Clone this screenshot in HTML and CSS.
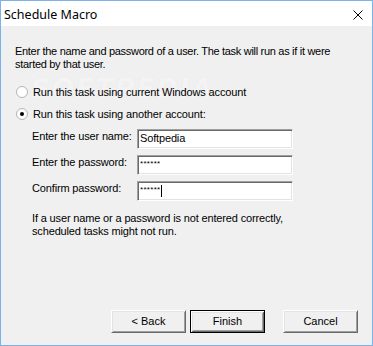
FILE: index.html
```
<!DOCTYPE html>
<html>
<head>
<meta charset="utf-8">
<link rel="stylesheet" href="styles.css">
</head>
<body>
<div class="window">
  <div class="titlebar">
    <span class="title">Schedule Macro</span>
    <svg class="close" width="10" height="10" viewBox="0 0 10 10"><path d="M0.5 0.5 L9.5 9.5 M9.5 0.5 L0.5 9.5" stroke="#000" stroke-width="1"/></svg>
  </div>
  <div class="content">
    <span class="watermark">SOFTPEDIA</span>
    <p class="intro">Enter the name and password of a user. The task will run as if it were<br>started by that user.</p>
    <div class="radios">
      <label class="radio-row">
        <svg class="radio" width="12" height="12" viewBox="0 0 12 12"><circle cx="6" cy="6" r="5.5" fill="#fff" stroke="#b4b4b4"/></svg>
        <span>Run this task using current Windows account</span>
      </label>
      <label class="radio-row">
        <svg class="radio" width="12" height="12" viewBox="0 0 12 12"><circle cx="6" cy="6" r="5.5" fill="#fff" stroke="#b4b4b4"/><circle cx="6" cy="6" r="2" fill="#000"/></svg>
        <span>Run this task using another account:</span>
      </label>
    </div>
    <div class="form">
      <div class="form-row">
        <span class="label">Enter the user name:</span>
        <div class="field"><span>Softpedia</span></div>
      </div>
      <div class="form-row">
        <span class="label">Enter the password:</span>
        <div class="field"><span class="pw">******</span></div>
      </div>
      <div class="form-row">
        <span class="label">Confirm password:</span>
        <div class="field"><span class="pw">******</span><span class="caret"></span></div>
      </div>
    </div>
    <p class="note">If a user name or a password is not entered correctly,<br>scheduled tasks might not run.</p>
    <div class="buttons">
      <div class="btn">&lt; Back</div>
      <div class="btn default">Finish</div>
      <div class="btn cancel">Cancel</div>
    </div>
  </div>
</div>
</body>
</html>
```
FILE: styles.css
```
* { box-sizing: border-box; }
html, body { margin: 0; padding: 0; }
body { width: 373px; height: 346px; overflow: hidden; background: #fff; }
.window {
  width: 373px; height: 346px;
  border: 1px solid #7ab2ea;
  display: flex; flex-direction: column;
  background: #f0f0f0;
}
.titlebar {
  height: 25px; flex: none;
  background: #fff;
  display: flex; align-items: center;
  padding-left: 3px; padding-right: 9px;
}
.title {
  font-family: "Noto Sans", sans-serif; font-size: 12.5px; color: #000;
  flex: 1; margin-top: 1px;
}
.close { margin-top: 2px; }
.content {
  flex: 1; position: relative;
  display: flex; flex-direction: column;
  padding: 19px 14px 12px 14px;
  font-family: "Liberation Sans", Arial, sans-serif; font-size: 11px; line-height: 13px; color: #000;
  letter-spacing: -0.15px;
}
p { margin: 0; position: relative; z-index: 1; }
.intro { letter-spacing: -0.3px; }
.radios { margin-top: 15px; display: flex; flex-direction: column; gap: 9px; position: relative; z-index: 1; }
.radio-row { display: flex; align-items: flex-start; height: 13px; padding-left: 1px; }
.radio { flex: none; margin-right: 5px; margin-top: 0px; }
.form { margin-top: 8px; margin-left: 17px; display: flex; flex-direction: column; gap: 6px; position: relative; z-index: 1; }
.form-row { display: flex; align-items: flex-start; height: 20px; }
.label { width: 105px; padding-top: 1px; }
.field {
  width: 156px; height: 20px; background: #fff;
  border-top: 1px solid #a0a0a0; border-left: 1px solid #a0a0a0;
  border-bottom: 1px solid #fff; border-right: 1px solid #fff;
  box-shadow: inset 1px 1px 0 #696969, inset -1px -1px 0 #e3e3e3;
  padding: 2px 0 0 2px;
  display: flex; align-items: flex-start;
}
.pw { font-size: 8px; letter-spacing: 0.3px; line-height: 10px; margin-top: 1px; }
.caret { display: inline-block; width: 1px; height: 12px; background: #000; margin-left: 1px; margin-top: 1px; }
.note { margin-top: 11px; margin-left: 17px; }
.buttons { margin-top: auto; display: flex; justify-content: flex-end; letter-spacing: 0; }
.btn {
  width: 75px; height: 23px; background: #f0f0f0;
  border-top: 1px solid #fff; border-left: 1px solid #fff;
  border-bottom: 1px solid #696969; border-right: 1px solid #696969;
  box-shadow: inset 1px 1px 0 #e3e3e3, inset -1px -1px 0 #a0a0a0;
  display: flex; align-items: center; justify-content: center;
}
.btn + .btn { margin-left: 4px; }
.btn.default {
  border: 1px solid #000;
  box-shadow: inset 1px 1px 0 #fff, inset -1px -1px 0 #696969, inset 2px 2px 0 #e3e3e3, inset -2px -2px 0 #a0a0a0;
}
.btn.cancel { margin-left: 18px; }
.watermark {
  position: absolute; left: 30px; top: 48px; z-index: 0;
  font-family: "DejaVu Sans", sans-serif; font-weight: bold; font-style: italic;
  font-size: 26px; letter-spacing: 2px; line-height: 30px;
  color: rgba(255,255,255,0.6);
  text-shadow: 0 0 1px rgba(200,200,200,0.3);
  pointer-events: none;
}
```
